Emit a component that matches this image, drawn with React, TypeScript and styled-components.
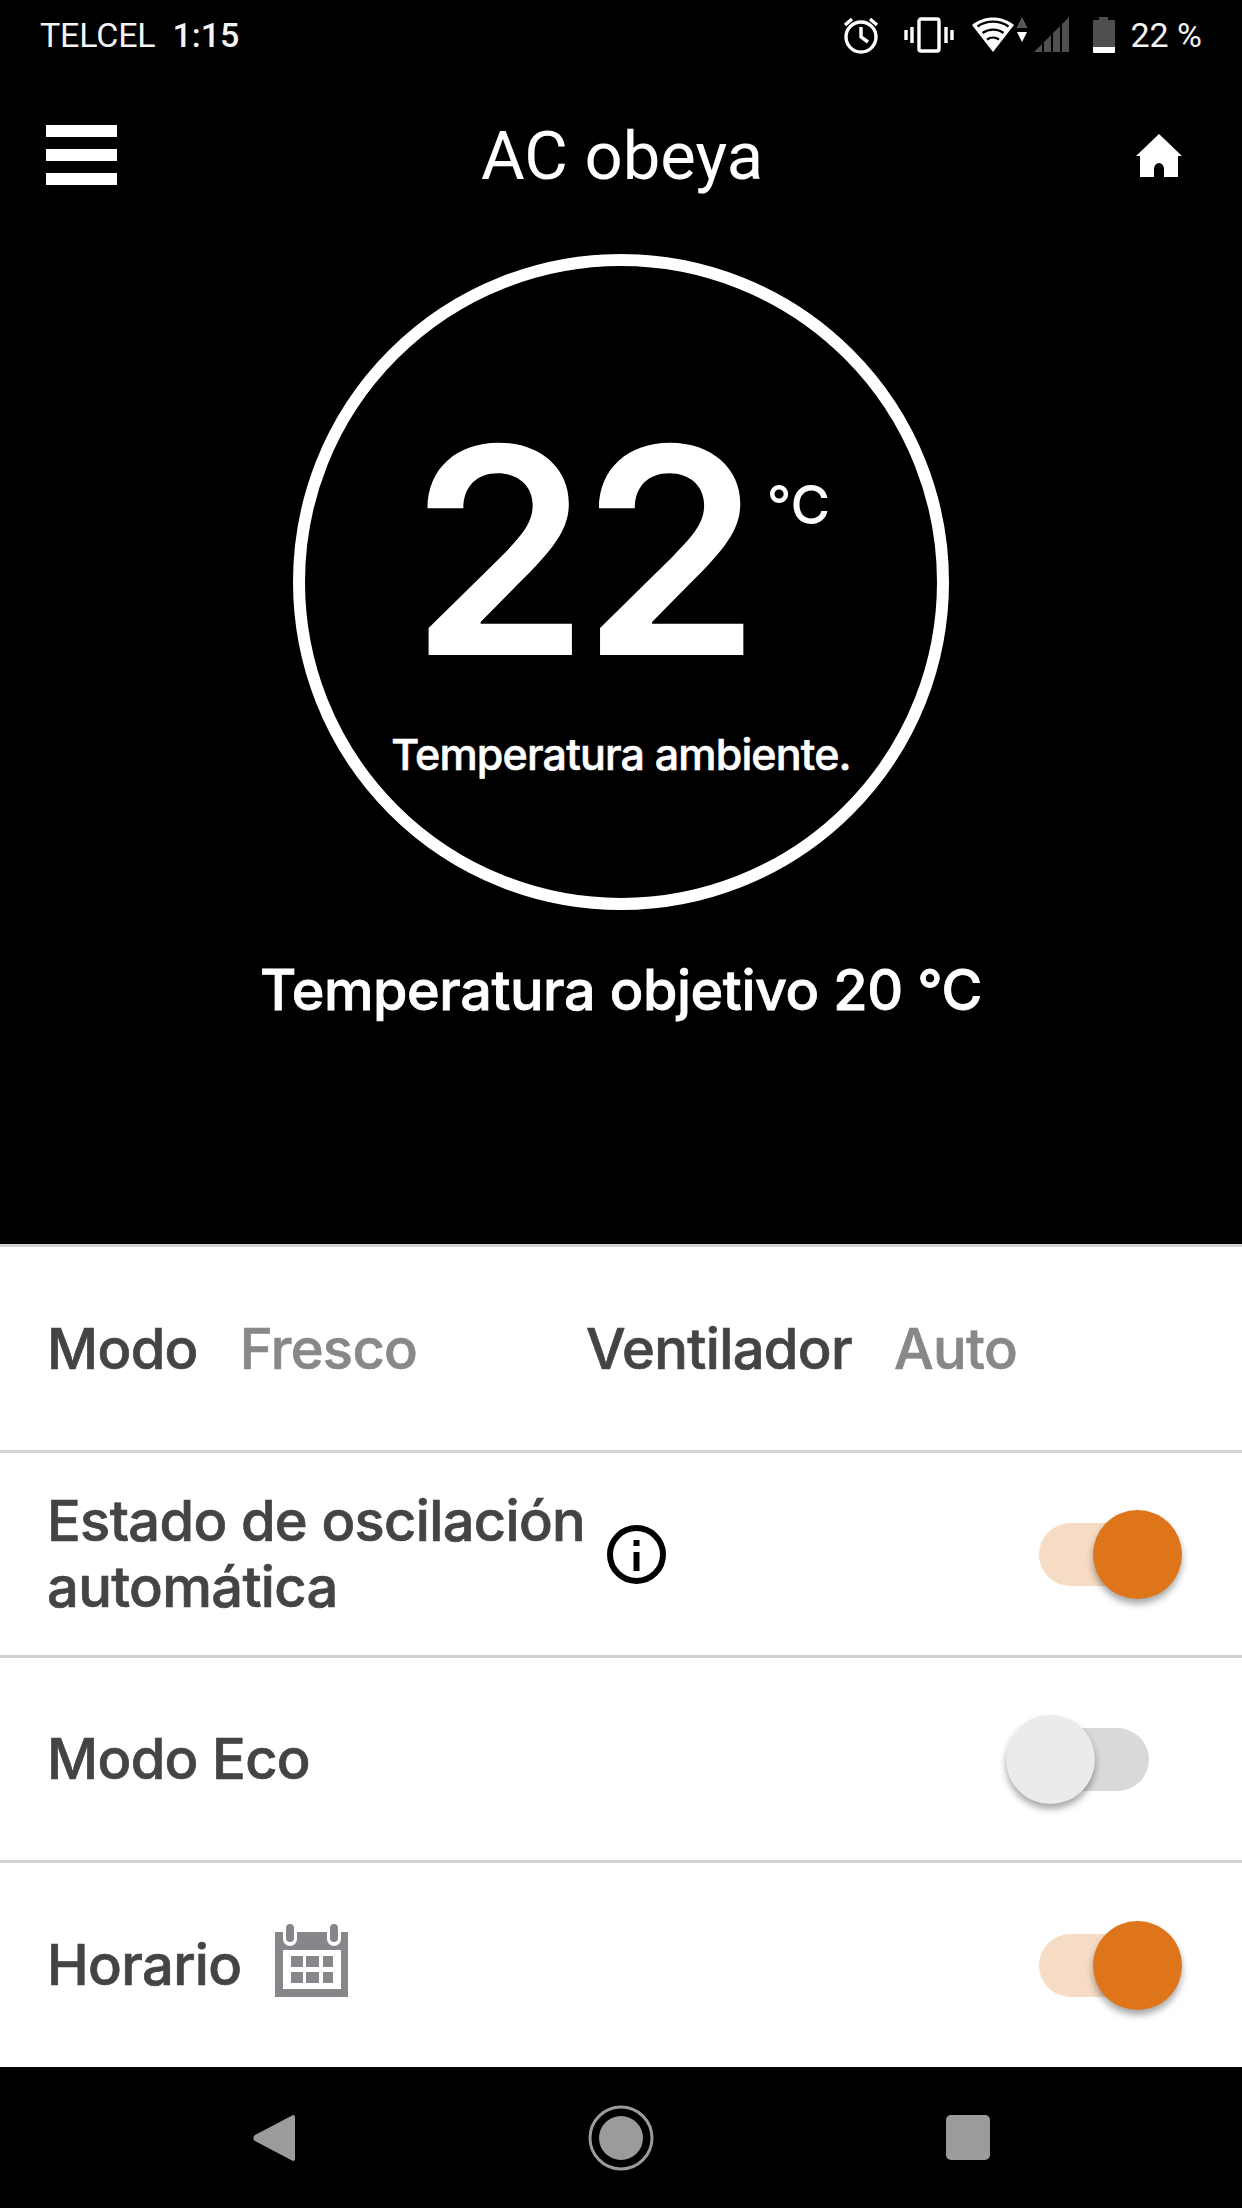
import React from 'react'
import styled, { createGlobalStyle } from 'styled-components'

const GlobalStyle = createGlobalStyle`
  html, body { margin: 0; padding: 0; background: #000; }
  * { box-sizing: border-box; }
`

const Page = styled.div`
  width: 1242px;
  height: 2208px;
  display: flex;
  flex-direction: column;
  font-family: Inter, "Liberation Sans", sans-serif;
  overflow: hidden;
`

const Hero = styled.section`
  height: 1244px;
  background: #000;
  color: #fff;
  display: flex;
  flex-direction: column;
  align-items: center;
`

const StatusBar = styled.div`
  width: 100%;
  height: 70px;
  padding: 0 40px;
  display: flex;
  align-items: center;
  font-family: Roboto, sans-serif;
  font-size: 34px;
  color: #f4f4f4;
`

const Carrier = styled.span`
  letter-spacing: -0.2px;
`

const Clock = styled.span`
  margin-left: 17px;
  font-weight: 500;
`

const StatusIcons = styled.div`
  margin-left: auto;
  display: flex;
  align-items: center;
`

const BatteryText = styled.span`
  margin-left: 14px;
`

const TopBar = styled.header`
  width: 100%;
  height: 171px;
  padding: 0 59px 0 46px;
  display: flex;
  align-items: center;
  justify-content: space-between;
`

const Burger = styled.div`
  width: 71px;
  display: flex;
  flex-direction: column;
  gap: 12px;
  margin-top: -2px;
  span {
    height: 12px;
    background: #fff;
  }
`

const Title = styled.h1`
  margin: 0 0 0 -8px;
  font-family: Roboto, sans-serif;
  font-weight: 400;
  font-size: 67px;
  color: #fff;
`

const Dial = styled.div`
  width: 656px;
  height: 656px;
  margin-top: 13px;
  border: 12px solid #fff;
  border-radius: 50%;
  display: flex;
  flex-direction: column;
  align-items: center;
`

const Reading = styled.div`
  display: flex;
  align-items: flex-start;
  margin: 134px 0 0 -2px;
`

const Degrees = styled.div`
  font-size: 288px;
  line-height: 300px;
  font-weight: 600;
  letter-spacing: -8px;
`

const Unit = styled.div`
  font-size: 54px;
  font-weight: 500;
  margin: 72px 0 0 14px;
`

const DialLabel = styled.div`
  font-size: 43px;
  font-weight: 500;
  letter-spacing: -0.85px;
  -webkit-text-stroke: 0.6px currentColor;
  margin-top: 28px;
`

const Target = styled.div`
  font-size: 55.7px;
  font-weight: 500;
  margin-top: 46px;
  letter-spacing: -0.4px;
  -webkit-text-stroke: 0.8px currentColor;
`

const Settings = styled.section`
  flex: 1;
  background: #fff;
  color: #444;
  display: flex;
  flex-direction: column;
`

const Row = styled.div<{ $height: number }>`
  height: ${p => p.$height}px;
  border-top: 3px solid #d2d2d2;
  padding: 0 0 0 47px;
  display: flex;
  align-items: center;
  font-size: 56px;
  font-weight: 500;
  letter-spacing: -0.65px;
  line-height: 66px;
  -webkit-text-stroke: 0.7px currentColor;
`

const Mode = styled.div`
  width: 539px;
  display: flex;
  gap: 42px;
`

const Muted = styled.span`
  color: #888;
`

const SwitchHolder = styled.div<{ $right: number }>`
  margin-left: auto;
  margin-right: ${p => p.$right}px;
  flex: none;
`

const Track = styled.div<{ $on: boolean }>`
  position: relative;
  width: 110px;
  height: 63px;
  border-radius: 32px;
  background: ${p => (p.$on ? '#f6dcc4' : '#d9d9d9')};
`

const Thumb = styled.div<{ $on: boolean }>`
  position: absolute;
  top: -13px;
  ${p => (p.$on ? 'right: -33px;' : 'left: -33px;')}
  width: 89px;
  height: 89px;
  border-radius: 50%;
  background: ${p => (p.$on ? '#df751b' : '#ebebeb')};
  box-shadow: 0 5px 7px rgba(0, 0, 0, 0.35);
`

const InfoIcon = styled.svg`
  margin: 0 0 0 22px;
  flex: none;
`

const CalendarIcon = styled.svg`
  margin: -9px 0 0 33px;
  flex: none;
`

const NavBar = styled.nav`
  height: 141px;
  background: #000;
  display: flex;
  align-items: center;
  padding: 0 0 0 253px;
`

const NavSlot = styled.div<{ $gap: number }>`
  margin-left: ${p => p.$gap}px;
  display: flex;
`

const Switch = ({ on, right }: { on: boolean; right: number }) => (
  <SwitchHolder $right={right}>
    <Track $on={on}>
      <Thumb $on={on} />
    </Track>
  </SwitchHolder>
)

const App = () => (
  <Page>
    <GlobalStyle />
    <Hero>
      <StatusBar>
        <Carrier>TELCEL</Carrier>
        <Clock>1:15</Clock>
        <StatusIcons>
          <svg width="38" height="38" viewBox="0 0 38 38" fill="none" stroke="#fff" strokeWidth="3.4">
            <circle cx="19" cy="21" r="15" />
            <path d="M19 11v10l7 5M3 9l7-6M35 9l-7-6" />
          </svg>
          <svg width="50" height="38" viewBox="0 0 50 38" fill="none" stroke="#fff" style={{ marginLeft: 24 }}>
            <rect x="15" y="3" width="20" height="32" rx="2" strokeWidth="3.4" />
            <path d="M8 11v16M2 14v10M42 11v16M48 14v10" strokeWidth="3.4" />
          </svg>
          <svg width="58" height="38" viewBox="0 0 58 38" style={{ marginLeft: 18 }}>
            <path d="M21 36 0 9c12-10 30-10 42 0z" fill="#fff" />
            <path d="M5.500 10.500c9-6.500 22-6.500 31 0M10.500 17c6.500-4.500 15-4.500 21 0" fill="none" stroke="#000" strokeWidth="2.400" />
            <path d="M15 23.500c3.500-2.500 8.500-2.500 12 0" fill="none" stroke="#000" strokeWidth="2.400" />
            <path d="m50 2 5 10H45zM50 26l5-10H45z" fill="#fff" />
            <path d="m50 2 5 10H45z" fill="#555" />
          </svg>
          <svg width="36" height="38" viewBox="0 0 36 38" fill="#4f4f4f" style={{ marginLeft: 4 }}>
            <path d="M0 36 8 28v8zM10 26l7-7v17h-7zM19 17l7-7v26h-7zM28 8l7-7v35h-7z" />
          </svg>
          <svg width="24" height="38" viewBox="0 0 24 38" style={{ marginLeft: 22 }}>
            <path d="M7 1h9v3h6a1 1 0 0 1 1 1v26H1V5a1 1 0 0 1 1-1h5z" fill="#4f4f4f" />
            <path d="M1 31h22v5a1 1 0 0 1-1 1H2a1 1 0 0 1-1-1z" fill="#fff" />
          </svg>
          <BatteryText>22 %</BatteryText>
        </StatusIcons>
      </StatusBar>
      <TopBar>
        <Burger>
          <span />
          <span />
          <span />
        </Burger>
        <Title>AC obeya</Title>
        <svg width="48" height="44" viewBox="0 0 48 44" fill="#fff">
          <path fillRule="evenodd" d="M24 0 47 22h-4v21H5V22H1zM19 43V35a5 6 0 0 1 10 0v8z" />
        </svg>
      </TopBar>
      <Dial>
        <Reading>
          <Degrees>22</Degrees>
          <Unit>°C</Unit>
        </Reading>
        <DialLabel>Temperatura ambiente.</DialLabel>
      </Dial>
      <Target>Temperatura objetivo 20 °C</Target>
    </Hero>
    <Settings>
      <Row $height={206}>
        <Mode>
          <span>Modo</span>
          <Muted>Fresco</Muted>
        </Mode>
        <Mode>
          <span>Ventilador</span>
          <Muted>Auto</Muted>
        </Mode>
      </Row>
      <Row $height={205}>
        <span>
          Estado de oscilación
          <br />
          automática
        </span>
        <InfoIcon width="59" height="59" viewBox="0 0 59 59">
          <circle cx="29.500" cy="29.500" r="26.500" fill="none" stroke="#000" strokeWidth="6" />
          <rect x="26.500" y="27" width="6" height="19" fill="#000" />
          <rect x="26.500" y="15" width="6" height="6" fill="#000" />
        </InfoIcon>
        <Switch on right={93} />
      </Row>
      <Row $height={205}>
        <span>Modo Eco</span>
        <Switch on={false} right={93} />
      </Row>
      <Row $height={207}>
        <span>Horario</span>
        <CalendarIcon width="73" height="73" viewBox="0 0 73 73">
          <path d="M0 8h73v65H0z" fill="#85878a" />
          <rect x="8" y="26" width="58" height="39" fill="#fff" />
          <rect x="8" y="0" width="14" height="22" rx="7" fill="#fff" />
          <rect x="52" y="0" width="14" height="22" rx="7" fill="#fff" />
          <rect x="11" y="0" width="8" height="18" rx="4" fill="#85878a" />
          <rect x="55" y="0" width="8" height="18" rx="4" fill="#85878a" />
          <path d="M16 32h12v11H16zM31 32h13v11H31zM48 32h10v11H48zM16 48h12v11H16zM31 48h13v11H31zM48 48h10v11H48z" fill="#85878a" />
        </CalendarIcon>
        <Switch on right={93} />
      </Row>
    </Settings>
    <NavBar>
      <NavSlot $gap={0}>
        <svg width="42" height="48" viewBox="0 0 42 48">
          <path d="M40 1a2 2 0 0 1 2 2v42a2 2 0 0 1-2 2L2 27a3.500 3.500 0 0 1 0-6z" fill="#9b9b9b" />
        </svg>
      </NavSlot>
      <NavSlot $gap={293}>
        <svg width="66" height="66" viewBox="0 0 66 66">
          <circle cx="33" cy="33" r="31" fill="none" stroke="#9b9b9b" strokeWidth="3" />
          <circle cx="33" cy="33" r="22" fill="#9b9b9b" />
        </svg>
      </NavSlot>
      <NavSlot $gap={292}>
        <svg width="44" height="45" viewBox="0 0 44 45">
          <rect width="44" height="45" rx="5" fill="#9b9b9b" />
        </svg>
      </NavSlot>
    </NavBar>
  </Page>
)

export default App
